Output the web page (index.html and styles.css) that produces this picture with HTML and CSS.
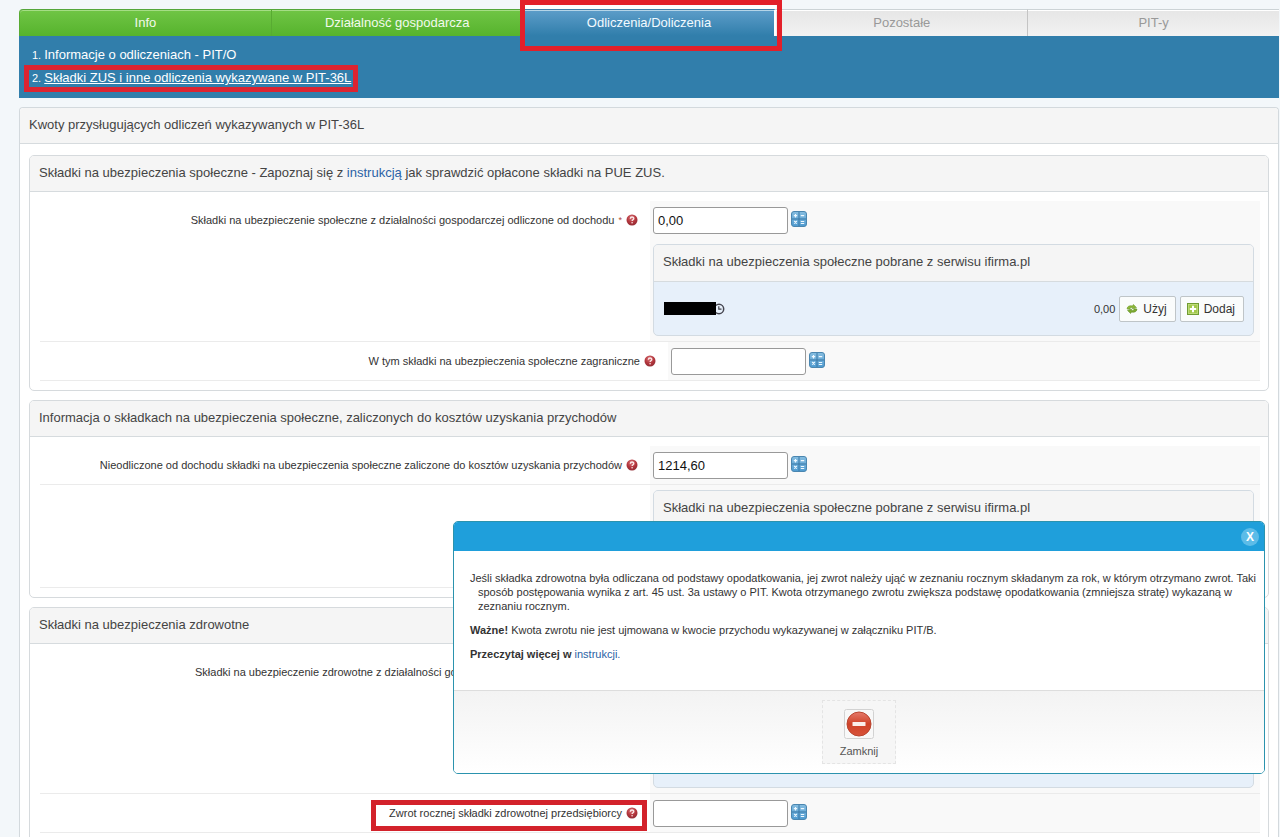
FILE: index.html
```html
<!DOCTYPE html>
<html lang="pl">

<head>
    <meta charset="UTF-8">
    <meta name="viewport" content="width=device-width, initial-scale=1.0">
    <title>Odliczenia/Doliczenia</title>
    <link rel="stylesheet" href="styles.css">
</head>

<body>
    <!-- Shared icons -->
    <svg class="sprite" aria-hidden="true">
        <defs>
            <linearGradient id="calcFill" x1="0" y1="0" x2="0" y2="1">
                <stop offset="0" stop-color="#86bde0" />
                <stop offset="1" stop-color="#4f9bd0" />
            </linearGradient>
            <radialGradient id="helpFill" cx="0.45" cy="0.3" r="0.75">
                <stop offset="0" stop-color="#d9777b" />
                <stop offset="0.55" stop-color="#b3353c" />
                <stop offset="1" stop-color="#8d2a33" />
            </radialGradient>
            <linearGradient id="stopFill" x1="0" y1="0" x2="0" y2="1">
                <stop offset="0" stop-color="#e5796a" />
                <stop offset="0.5" stop-color="#cf4228" />
                <stop offset="1" stop-color="#d8523a" />
            </linearGradient>
        </defs>
        <symbol id="calc" viewBox="0 0 16 16">
            <rect x="0.5" y="0.5" width="15" height="15" rx="2.5" fill="url(#calcFill)" stroke="#4a86b0" />
            <path d="M8 1v14M1 8h14" stroke="#3b78a6" stroke-width="1" />
            <path d="M4.5 3v3.4M2.8 4.7h3.4M9.8 4.7h3.4M3.2 10l2.6 2.6M5.8 10l-2.6 2.6M9.8 10.5h3.4M9.8 12.5h3.4" stroke="#eef8ff" stroke-width="1.2" fill="none" />
        </symbol>
        <symbol id="help" viewBox="0 0 12 12">
            <circle cx="6" cy="6" r="5.5" fill="url(#helpFill)" />
            <path d="M4.3 4.7c0-2.3 3.5-2.2 3.5-.2 0 1.3-1.7 1.2-1.7 2.5" fill="none" stroke="#fbe9e9" stroke-width="1.3" />
            <circle cx="6.1" cy="8.8" r="0.8" fill="#fbe9e9" />
        </symbol>
        <symbol id="clock" viewBox="0 0 12 12">
            <circle cx="6" cy="6" r="4.7" fill="none" stroke="#45454f" stroke-width="1.5" />
            <path d="M5.8 3.2v3h2.7" fill="none" stroke="#45454f" stroke-width="1.2" />
        </symbol>
        <symbol id="use" viewBox="0 0 14 14">
            <path d="M1.2 7C1.4 3.6 4.6 2.5 7.5 3.6L8.6 1.8l3.6 3.5-4.8 1.5.6-1.5C5.6 4.7 4.6 5.8 4.8 7.2z" fill="#8fb83a" stroke="#6c9a2c" stroke-width="0.7" />
            <path d="M12.8 7c-.2 3.4-3.4 4.5-6.3 3.4l-1.1 1.8L1.8 8.7l4.8-1.5-.6 1.5c2.4.6 3.4-.5 3.2-1.9z" fill="#7fac30" stroke="#5f8e24" stroke-width="0.7" />
        </symbol>
        <symbol id="add" viewBox="0 0 12 12">
            <rect x="0.5" y="0.5" width="11" height="11" fill="#a3c94c" stroke="#709c33" />
            <rect x="1.5" y="1.5" width="9" height="9" fill="none" stroke="#c3de82" stroke-width="0.8" />
            <path d="M6 2.8v6.4M2.8 6h6.4" stroke="#fff" stroke-width="2" />
        </symbol>
    </svg>

    <div class="page">
        <nav class="tabs">
            <a class="tab done first" href="#">Info</a>
            <a class="tab done" href="#">Działalność gospodarcza</a>
            <a class="tab active" href="#">Odliczenia/Doliczenia</a>
            <a class="tab" href="#">Pozostałe</a>
            <a class="tab" href="#">PIT-y</a>
        </nav>

        <ol class="steps">
            <li>1. <a href="#">Informacje o odliczeniach - PIT/O</a></li>
            <li class="current">2. <a href="#">Składki ZUS i inne odliczenia wykazywane w PIT-36L</a></li>
        </ol>

        <main class="panel">
            <h1 class="panel-title">Kwoty przysługujących odliczeń wykazywanych w PIT-36L</h1>
            <div class="panel-body">

                <!-- Social insurance -->
                <section class="box">
                    <h2 class="box-title">Składki na ubezpieczenia społeczne - Zapoznaj się z <a href="#">instrukcją</a> jak sprawdzić opłacone składki na PUE ZUS.</h2>
                    <div class="row">
                        <div class="label">
                            <label for="social">Składki na ubezpieczenie społeczne z działalności gospodarczej odliczone od dochodu</label>
                            <span class="required">*</span>
                            <svg class="help"><use href="#help" /></svg>
                        </div>
                        <div class="field">
                            <div class="amount">
                                <input type="text" id="social" value="0,00">
                                <svg class="calc"><use href="#calc" /></svg>
                            </div>
                            <div class="source">
                                <h3 class="source-title">Składki na ubezpieczenia społeczne pobrane z serwisu ifirma.pl</h3>
                                <div class="source-body">
                                    <span class="hidden-date"></span>
                                    <svg class="clock"><use href="#clock" /></svg>
                                    <span class="sum">0,00</span>
                                    <button type="button" class="btn"><svg><use href="#use" /></svg>Użyj</button>
                                    <button type="button" class="btn"><svg><use href="#add" /></svg>Dodaj</button>
                                </div>
                            </div>
                        </div>
                    </div>
                    <div class="row nested">
                        <div class="label">
                            <label for="foreign">W tym składki na ubezpieczenia społeczne zagraniczne</label>
                            <svg class="help"><use href="#help" /></svg>
                        </div>
                        <div class="field">
                            <div class="amount">
                                <input type="text" id="foreign">
                                <svg class="calc"><use href="#calc" /></svg>
                            </div>
                        </div>
                    </div>
                </section>

                <!-- Contributions counted as costs -->
                <section class="box">
                    <h2 class="box-title">Informacja o składkach na ubezpieczenia społeczne, zaliczonych do kosztów uzyskania przychodów</h2>
                    <div class="row">
                        <div class="label">
                            <label for="costs">Nieodliczone od dochodu składki na ubezpieczenia społeczne zaliczone do kosztów uzyskania przychodów</label>
                            <svg class="help"><use href="#help" /></svg>
                        </div>
                        <div class="field">
                            <div class="amount">
                                <input type="text" id="costs" value="1214,60">
                                <svg class="calc"><use href="#calc" /></svg>
                            </div>
                        </div>
                    </div>
                    <div class="row">
                        <div class="label"></div>
                        <div class="field source-only">
                            <div class="source">
                                <h3 class="source-title">Składki na ubezpieczenia społeczne pobrane z serwisu ifirma.pl</h3>
                                <div class="source-body"></div>
                            </div>
                        </div>
                    </div>
                </section>

                <!-- Health insurance -->
                <section class="box">
                    <h2 class="box-title">Składki na ubezpieczenia zdrowotne</h2>
                    <div class="row">
                        <div class="label wide">
                            <span>Składki na ubezpieczenie zdrowotne z działalności gos</span>
                        </div>
                        <div class="field">
                            <div class="amount"></div>
                            <div class="source">
                                <div class="source-title"></div>
                                <div class="source-body"></div>
                            </div>
                        </div>
                    </div>
                    <div class="row">
                        <div class="label marked">
                            <label for="refund">Zwrot rocznej składki zdrowotnej przedsiębiorcy</label>
                            <svg class="help"><use href="#help" /></svg>
                        </div>
                        <div class="field">
                            <div class="amount">
                                <input type="text" id="refund">
                                <svg class="calc"><use href="#calc" /></svg>
                            </div>
                        </div>
                    </div>
                </section>
            </div>
        </main>

        <div class="dialog" role="dialog">
            <div class="dialog-bar">
                <button type="button" class="dialog-x">X</button>
            </div>
            <div class="dialog-text">
                <p class="hanging">Jeśli składka zdrowotna była odliczana od podstawy opodatkowania, jej zwrot należy ująć w zeznaniu rocznym składanym za rok, w którym otrzymano zwrot. Taki sposób postępowania wynika z art. 45 ust. 3a ustawy o PIT. Kwota otrzymanego zwrotu zwiększa podstawę opodatkowania (zmniejsza stratę) wykazaną w zeznaniu rocznym.</p>
                <p><b>Ważne!</b> Kwota zwrotu nie jest ujmowana w kwocie przychodu wykazywanej w załączniku PIT/B.</p>
                <p><b>Przeczytaj więcej w</b> <a href="#">instrukcji.</a></p>
            </div>
            <div class="dialog-footer">
                <button type="button" class="close-btn">
                    <svg viewBox="0 0 30 30">
                        <rect x="0.5" y="0.5" width="29" height="29" rx="2" fill="#f8f8f8" stroke="#d2d2d2" />
                        <circle cx="15" cy="15" r="12" fill="url(#stopFill)" stroke="#b9452f" />
                        <rect x="8.5" y="13" width="13" height="4" rx="0.5" fill="#fbeeea" />
                    </svg>
                    Zamknij
                </button>
            </div>
        </div>
    </div>
</body>

</html>
```
FILE: styles.css
```css
*,
*::after {
    box-sizing: border-box;
}

body {
    font-family: Arial, "Liberation Sans", sans-serif;
    font-size: 11px;
    margin: 0;
    color: #333;
    background: #f3f7fa;
}

a {
    color: #2a62a5;
    text-decoration: none;
}

h1,
h2,
h3,
p {
    margin: 0;
    font-weight: normal;
}

.sprite {
    position: absolute;
    width: 0;
    height: 0;
}

.page {
    position: relative;
    height: 100vh;
    padding: 9px 1px 0 19px;
    overflow-y: auto;
    scrollbar-width: none;
}
/* Tabs */

.tabs {
    display: flex;
}

.tab {
    flex: 1;
    height: 27px;
    border-top: 1px solid #ccd3d6;
    border-left: 1px solid #c4c4c4;
    box-shadow: inset 0 1px 0 #fff;
    background: linear-gradient(#e6e6e6, #f2f2f2);
    color: #999;
    font-size: 13px;
    line-height: 25px;
    text-align: center;
}

.tab.done {
    border-top-color: #55a63a;
    border-left-color: #58ab32;
    box-shadow: inset 0 1px 0 #a5dd85;
    background: linear-gradient(#70c545, #56b32d);
    color: #f2faec;
}

.tab.first {
    border-top-left-radius: 4px;
}

.tab.active {
    position: relative;
    border-top-color: #3f7fa8;
    border-left-color: #fff;
    border-right: 2px solid #fff;
    box-shadow: inset 0 1px 0 #b5d5e8, 0 -4px 0 #fff;
    background: linear-gradient(#5d9dc9, #307eab);
    color: #f2faff;
}

.tab.active::after {
    content: "";
    position: absolute;
    top: -10px;
    left: -4px;
    right: -8px;
    height: 51px;
    border: 5px solid #e3202a;
}

.tab.active + .tab {
    border-left: none;
}
/* Steps under the tabs */

.steps {
    margin: 0 0 9px;
    padding: 9px 5px 6px;
    background: #317eab;
    color: #fff;
    list-style: none;
    line-height: 20px;
}

.steps li {
    display: table;
    padding: 0 8px;
}

.steps a {
    color: #fff;
    font-size: 13px;
}

.steps .current {
    padding: 0 2px 1px 3px;
    border: 5px solid #dc2430;
    line-height: 16px;
}

.steps .current a {
    text-decoration: underline;
}
/* Panels */

.panel {
    border: 1px solid #d3d9dd;
    border-bottom: none;
    border-radius: 4px 4px 0 0;
    background: #fff;
}

.panel-title,
.box-title,
.source-title {
    height: 36px;
    padding: 0 9px;
    border-bottom: 1px solid #d6dbde;
    border-radius: 4px 4px 0 0;
    background: #f5f5f5;
    color: #444;
    font-size: 13px;
    line-height: 34px;
}

.panel-body {
    display: flex;
    flex-direction: column;
    gap: 9px;
    padding: 11px 9px;
}

.box {
    padding-bottom: 9px;
    border: 1px solid #d6dadd;
    border-radius: 5px;
}

.box-title {
    margin-bottom: 9px;
}
/* Form rows */

.row {
    display: flex;
    margin: 0 8px 0 10px;
    border-bottom: 1px solid #ebebeb;
}

.row.nested {
    padding-left: 36px;
}

.label {
    display: flex;
    align-items: center;
    justify-content: flex-end;
    align-self: flex-start;
    flex: 0 0 50%;
    height: 38px;
    padding-right: 12px;
    white-space: nowrap;
}

.label.wide {
    justify-content: flex-start;
    padding-left: 155px;
}

.label.marked {
    position: relative;
}

.label.marked::after {
    content: "";
    position: absolute;
    top: 6px;
    right: 3px;
    width: 276px;
    height: 31px;
    border: 5px solid #d3222b;
}

.required {
    margin-left: 4px;
    color: #b04a3a;
    font-size: 9px;
}

.help {
    width: 12px;
    height: 12px;
    margin-left: 4px;
}

.field {
    flex: 1;
    padding: 6px 6px 5px 3px;
    background: #f9f9f9;
}

.field.source-only {
    padding-top: 5px;
}

.amount {
    display: flex;
    align-items: center;
    gap: 3px;
    height: 27px;
}

.amount input {
    width: 135px;
    height: 27px;
    padding: 0 4px;
    border: 1px solid #999;
    border-radius: 3px;
    background: #fff;
    color: #111;
    font-family: inherit;
    font-size: 13px;
}

.calc {
    width: 16px;
    height: 16px;
    margin-bottom: 3px;
}
/* Amounts taken from the service */

.source {
    border: 1px solid #d3dbe2;
    border-radius: 5px;
    background: #e7f0fa;
}

.source-title {
    height: 37px;
    line-height: 34px;
}

.amount + .source {
    margin-top: 10px;
}

.source-body {
    display: flex;
    align-items: center;
    height: 53px;
    padding: 0 9px 0 10px;
}

.hidden-date {
    z-index: 1;
    width: 52px;
    height: 13px;
    background: #000;
}

.clock {
    width: 12px;
    height: 12px;
    margin: 0 auto 0 -3px;
}

.btn {
    display: flex;
    align-items: center;
    gap: 4px;
    height: 26px;
    margin-left: 4px;
    padding: 0 8px 0 5px;
    border: 1px solid #bfc5c8;
    border-radius: 2px;
    background: #fafcfc;
    color: #333;
    font-family: inherit;
    font-size: 12px;
}

.btn svg {
    width: 14px;
    height: 12px;
}
/* Dialog */

.dialog {
    position: absolute;
    z-index: 2;
    top: 521px;
    right: 15px;
    width: 812px;
    border: 1px solid #2b93ae;
    border-radius: 5px;
    background: #fff;
}

.dialog-bar {
    display: flex;
    align-items: center;
    justify-content: flex-end;
    height: 29px;
    padding-right: 5px;
    border-radius: 4px 4px 0 0;
    background: #1f9fdb;
}

.dialog-x {
    width: 18px;
    height: 18px;
    padding: 0;
    border: none;
    border-radius: 50%;
    background: #5cbce8;
    color: #fff;
    font-family: inherit;
    font-size: 12px;
    font-weight: bold;
}

.dialog-text {
    height: 139px;
    padding: 20px 4px 0 16px;
    line-height: 14px;
}

.dialog-text p {
    margin-bottom: 10px;
}

.dialog-text .hanging {
    padding-left: 8px;
    text-indent: -8px;
}

.dialog-footer {
    display: flex;
    justify-content: center;
    height: 83px;
    padding-top: 9px;
    border-top: 1px solid #ddd;
    border-radius: 0 0 4px 4px;
    background: linear-gradient(#f3f3f3, #fff);
}

.close-btn {
    display: flex;
    flex-direction: column;
    align-items: center;
    gap: 6px;
    width: 74px;
    height: 64px;
    padding: 8px 0 0;
    border: 1px dashed #e4e4e4;
    background: #f6f6f6;
    color: #555;
    font-family: inherit;
    font-size: 11px;
}

.close-btn svg {
    width: 30px;
    height: 30px;
}
```
